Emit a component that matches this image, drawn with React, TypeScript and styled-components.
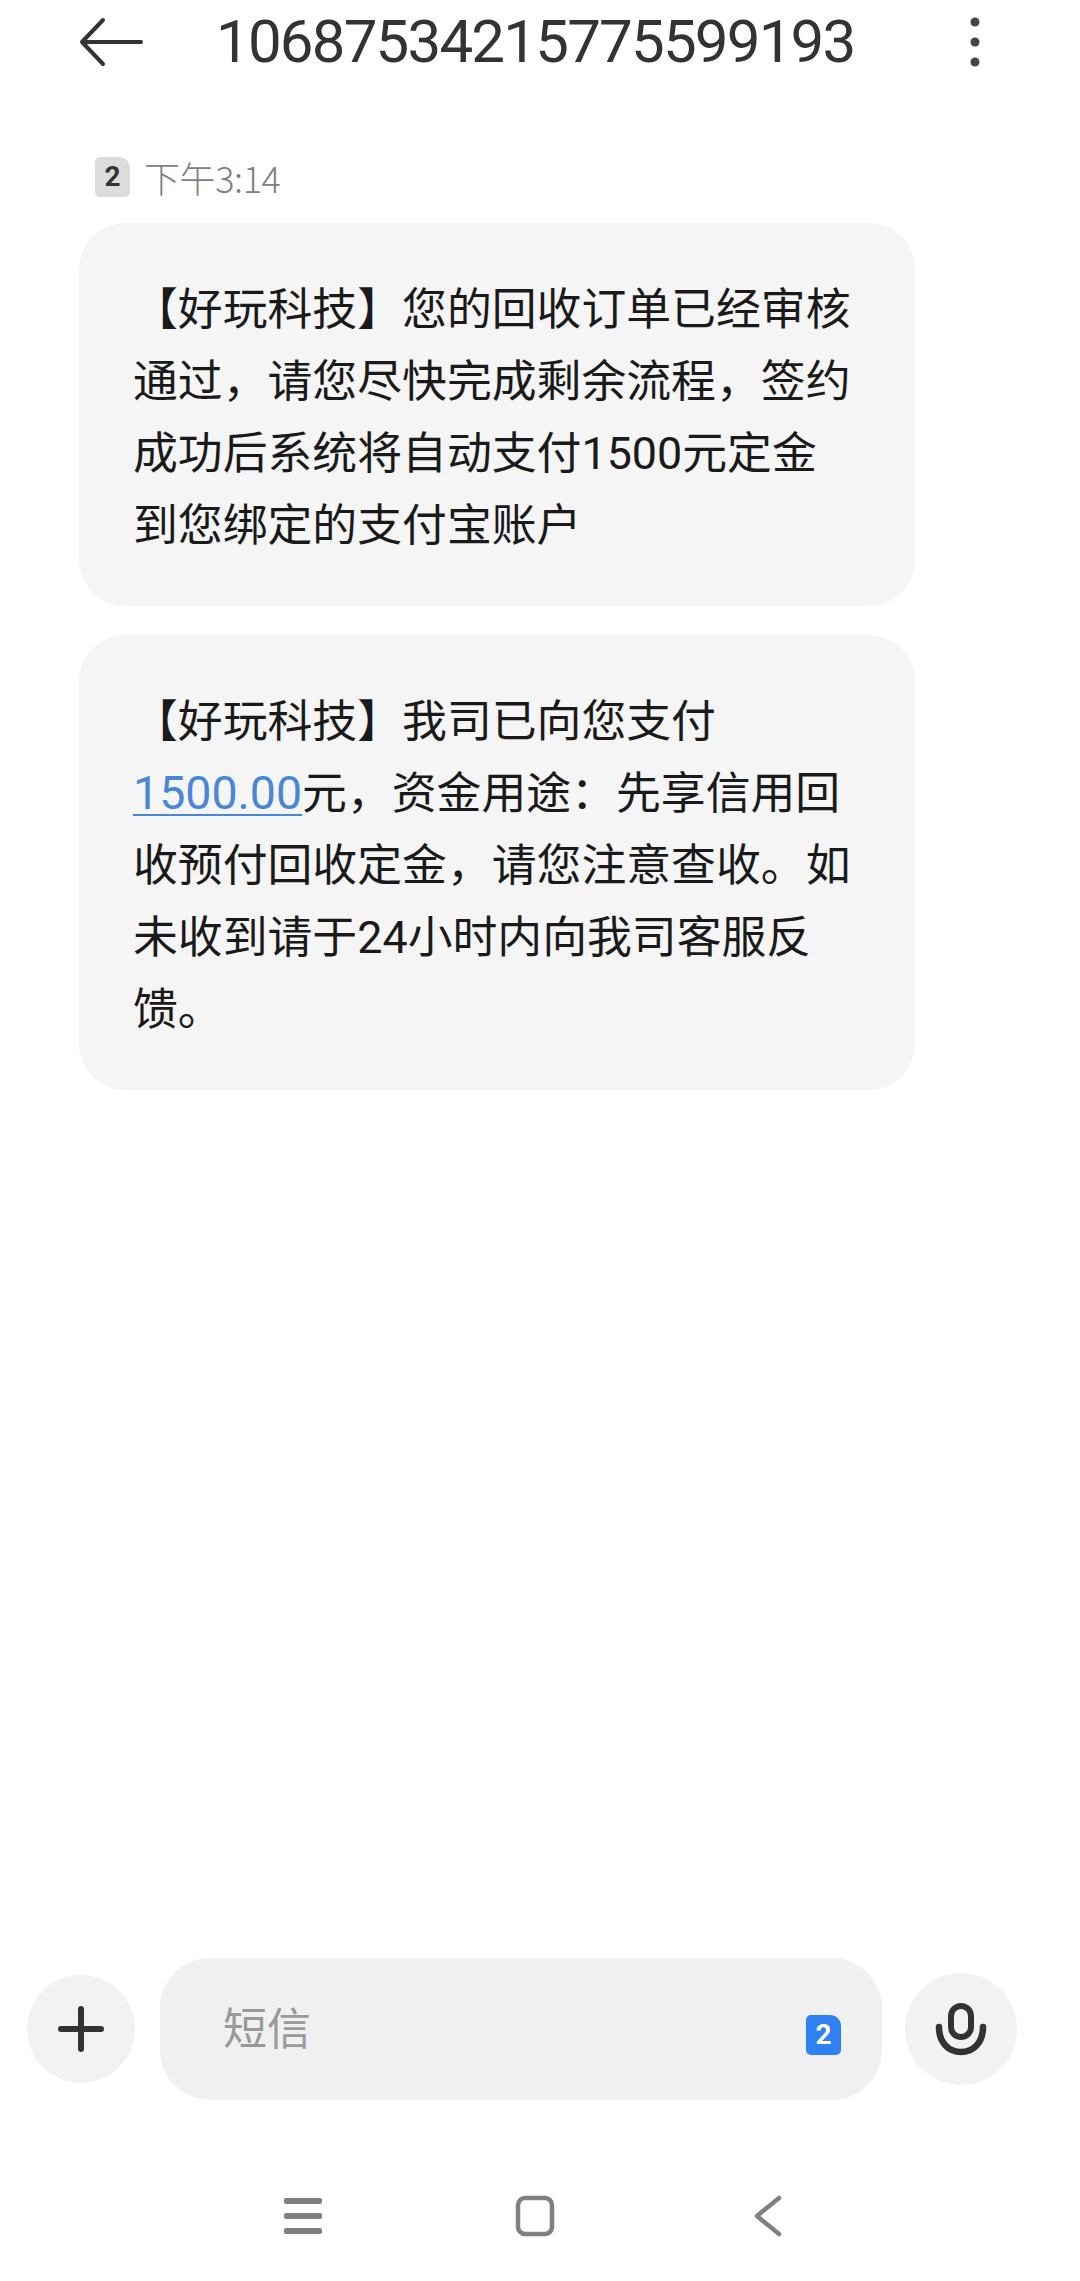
import React from "react";
import styled, { createGlobalStyle } from "styled-components";

const Global = createGlobalStyle`
  html, body { margin: 0; padding: 0; background: #fff; }
  * { box-sizing: border-box; }
`;

const Page = styled.div`
  width: 1080px;
  height: 2281px;
  display: flex;
  flex-direction: column;
  overflow: hidden;
  background: #fff;
  font-family: "Noto Sans CJK SC", Roboto, sans-serif;
`;

const Header = styled.header`
  height: 84px;
  display: flex;
  align-items: center;
  padding: 0 0 0 79px;
`;

const BackIcon = styled.svg`
  width: 66px;
  height: 50px;
  flex: none;
`;

const Title = styled.h1`
  margin: 0 0 0 71px;
  width: 640px;
  font: 400 60px/84px Roboto, sans-serif;
  letter-spacing: -1.8px;
  color: #333;
  white-space: nowrap;
`;

const More = styled.svg`
  width: 12px;
  height: 52px;
  margin-left: 113px;
  flex: none;
`;

const Thread = styled.main`
  flex: 1;
  padding: 70px 0 0 79px;
  display: flex;
  flex-direction: column;
`;

const Stamp = styled.div`
  height: 46px;
  display: flex;
  align-items: center;
  gap: 14px;
  padding-left: 16px;
  margin-bottom: 23px;
`;

const SimBadge = styled.span<{ $bg: string; $fg: string }>`
  width: 35px;
  height: 40px;
  flex: none;
  display: flex;
  align-items: center;
  justify-content: center;
  background: ${(p) => p.$bg};
  color: ${(p) => p.$fg};
  font: 700 28px/1 Roboto, sans-serif;
  border-radius: 5px 11px 5px 5px;
`;

const Time = styled.span`
  font-size: 36px;
  line-height: 44px;
  color: #808080;
  font-weight: 300;
  letter-spacing: -0.4px;
`;

const Bubble = styled.div`
  width: 836px;
  padding: 47px 40px 0 54px;
  background: #f5f5f5;
  border-radius: 46px;
  font-size: 44.85px;
  line-height: 72px;
  color: #1a1a1a;
  margin-bottom: 29px;
`;

const FirstBubble = styled(Bubble)`
  height: 383px;
`;

const SecondBubble = styled(Bubble)`
  height: 455px;
`;

const Line = styled.div`
  white-space: nowrap;
  height: 72px;
`;

const Amount = styled.span`
  color: #4a86d8;
  text-decoration: underline;
  text-underline-offset: 5px;
  text-decoration-thickness: 2px;
  font: 400 46.5px/72px Roboto, sans-serif;
`;

const Digits = styled.span`
  font-family: Roboto, sans-serif;
`;

const Composer = styled.div`
  height: 142px;
  display: flex;
  align-items: center;
  padding-left: 27px;
`;

const RoundButton = styled.button<{ $size: number }>`
  width: ${(p) => p.$size}px;
  height: ${(p) => p.$size}px;
  flex: none;
  border: 0;
  padding: 0;
  border-radius: 50%;
  background: #f2f2f2;
  display: flex;
  align-items: center;
  justify-content: center;
`;

const InputPill = styled.div`
  width: 722px;
  height: 142px;
  margin: 0 23px 0 25px;
  flex: none;
  border-radius: 50px;
  background: #f0f0f0;
  display: flex;
  align-items: center;
  justify-content: space-between;
  padding: 0 41px 0 63px;
`;

const Placeholder = styled.span`
  font-size: 44px;
  color: #999;
  line-height: 1;
  margin-top: -6px;
`;

const PillSim = styled(SimBadge)`
  margin-top: 12px;
`;

const NavBar = styled.nav`
  height: 181px;
  display: flex;
  align-items: flex-start;
  padding: 95px 0 0 283px;
`;

const NavIcon = styled.svg<{ $gap: number }>`
  width: 40px;
  height: 42px;
  flex: none;
  margin-right: ${(p) => p.$gap}px;
`;

export default function App() {
  return (
    <Page>
      <Global />
      <Header>
        <BackIcon viewBox="0 0 66 50" fill="none" stroke="#333" strokeWidth="4" strokeLinecap="round" strokeLinejoin="round">
          <path d="M62 25H3M24 3 3 25l21 22" />
        </BackIcon>
        <Title>10687534215775599193</Title>
        <More viewBox="0 0 12 52" fill="#444">
          <circle cx="6" cy="6" r="4.5" />
          <circle cx="6" cy="26" r="4.5" />
          <circle cx="6" cy="46" r="4.5" />
        </More>
      </Header>
      <Thread>
        <Stamp>
          <SimBadge $bg="#dcdcdc" $fg="#333">2</SimBadge>
          <Time>下午3:14</Time>
        </Stamp>
        <FirstBubble>
          <Line>【好玩科技】您的回收订单已经审核</Line>
          <Line>通过，请您尽快完成剩余流程，签约</Line>
          <Line>成功后系统将自动支付<Digits>1500</Digits>元定金</Line>
          <Line>到您绑定的支付宝账户</Line>
        </FirstBubble>
        <SecondBubble>
          <Line>【好玩科技】我司已向您支付</Line>
          <Line><Amount>1500.00</Amount>元，资金用途：先享信用回</Line>
          <Line>收预付回收定金，请您注意查收。如</Line>
          <Line>未收到请于<Digits>24</Digits>小时内向我司客服反</Line>
          <Line>馈。</Line>
        </SecondBubble>
      </Thread>
      <Composer>
        <RoundButton $size={108}>
          <svg width="46" height="46" viewBox="0 0 46 46" fill="none" stroke="#333" strokeWidth="6" strokeLinecap="round">
            <path d="M23 3v40M3 23h40" />
          </svg>
        </RoundButton>
        <InputPill>
          <Placeholder>短信</Placeholder>
          <PillSim $bg="#2f80f0" $fg="#fff">2</PillSim>
        </InputPill>
        <RoundButton $size={112}>
          <svg width="54" height="54" viewBox="0 0 54 54" fill="none" stroke="#333" strokeLinecap="round">
            <rect x="17" y="4" width="20" height="31" rx="10" strokeWidth="6" />
            <path d="M5 25c0 16 10 25 22 25s22-9 22-25" strokeWidth="6.5" />
          </svg>
        </RoundButton>
      </Composer>
      <NavBar>
        <NavIcon $gap={192} viewBox="0 0 40 42" fill="#808080">
          <rect x="1" y="3" width="38" height="6" rx="2" />
          <rect x="1" y="18" width="38" height="6" rx="2" />
          <rect x="1" y="33" width="38" height="6" rx="2" />
        </NavIcon>
        <NavIcon $gap={196} viewBox="0 0 40 42" fill="none" stroke="#808080" strokeWidth="4.5">
          <rect x="3" y="3" width="34" height="36" rx="7" />
        </NavIcon>
        <NavIcon $gap={0} viewBox="0 0 40 42" fill="none" stroke="#808080" strokeWidth="4.5" strokeLinecap="round" strokeLinejoin="round">
          <path d="M28 3 6 21l22 18" />
        </NavIcon>
      </NavBar>
    </Page>
  );
}
